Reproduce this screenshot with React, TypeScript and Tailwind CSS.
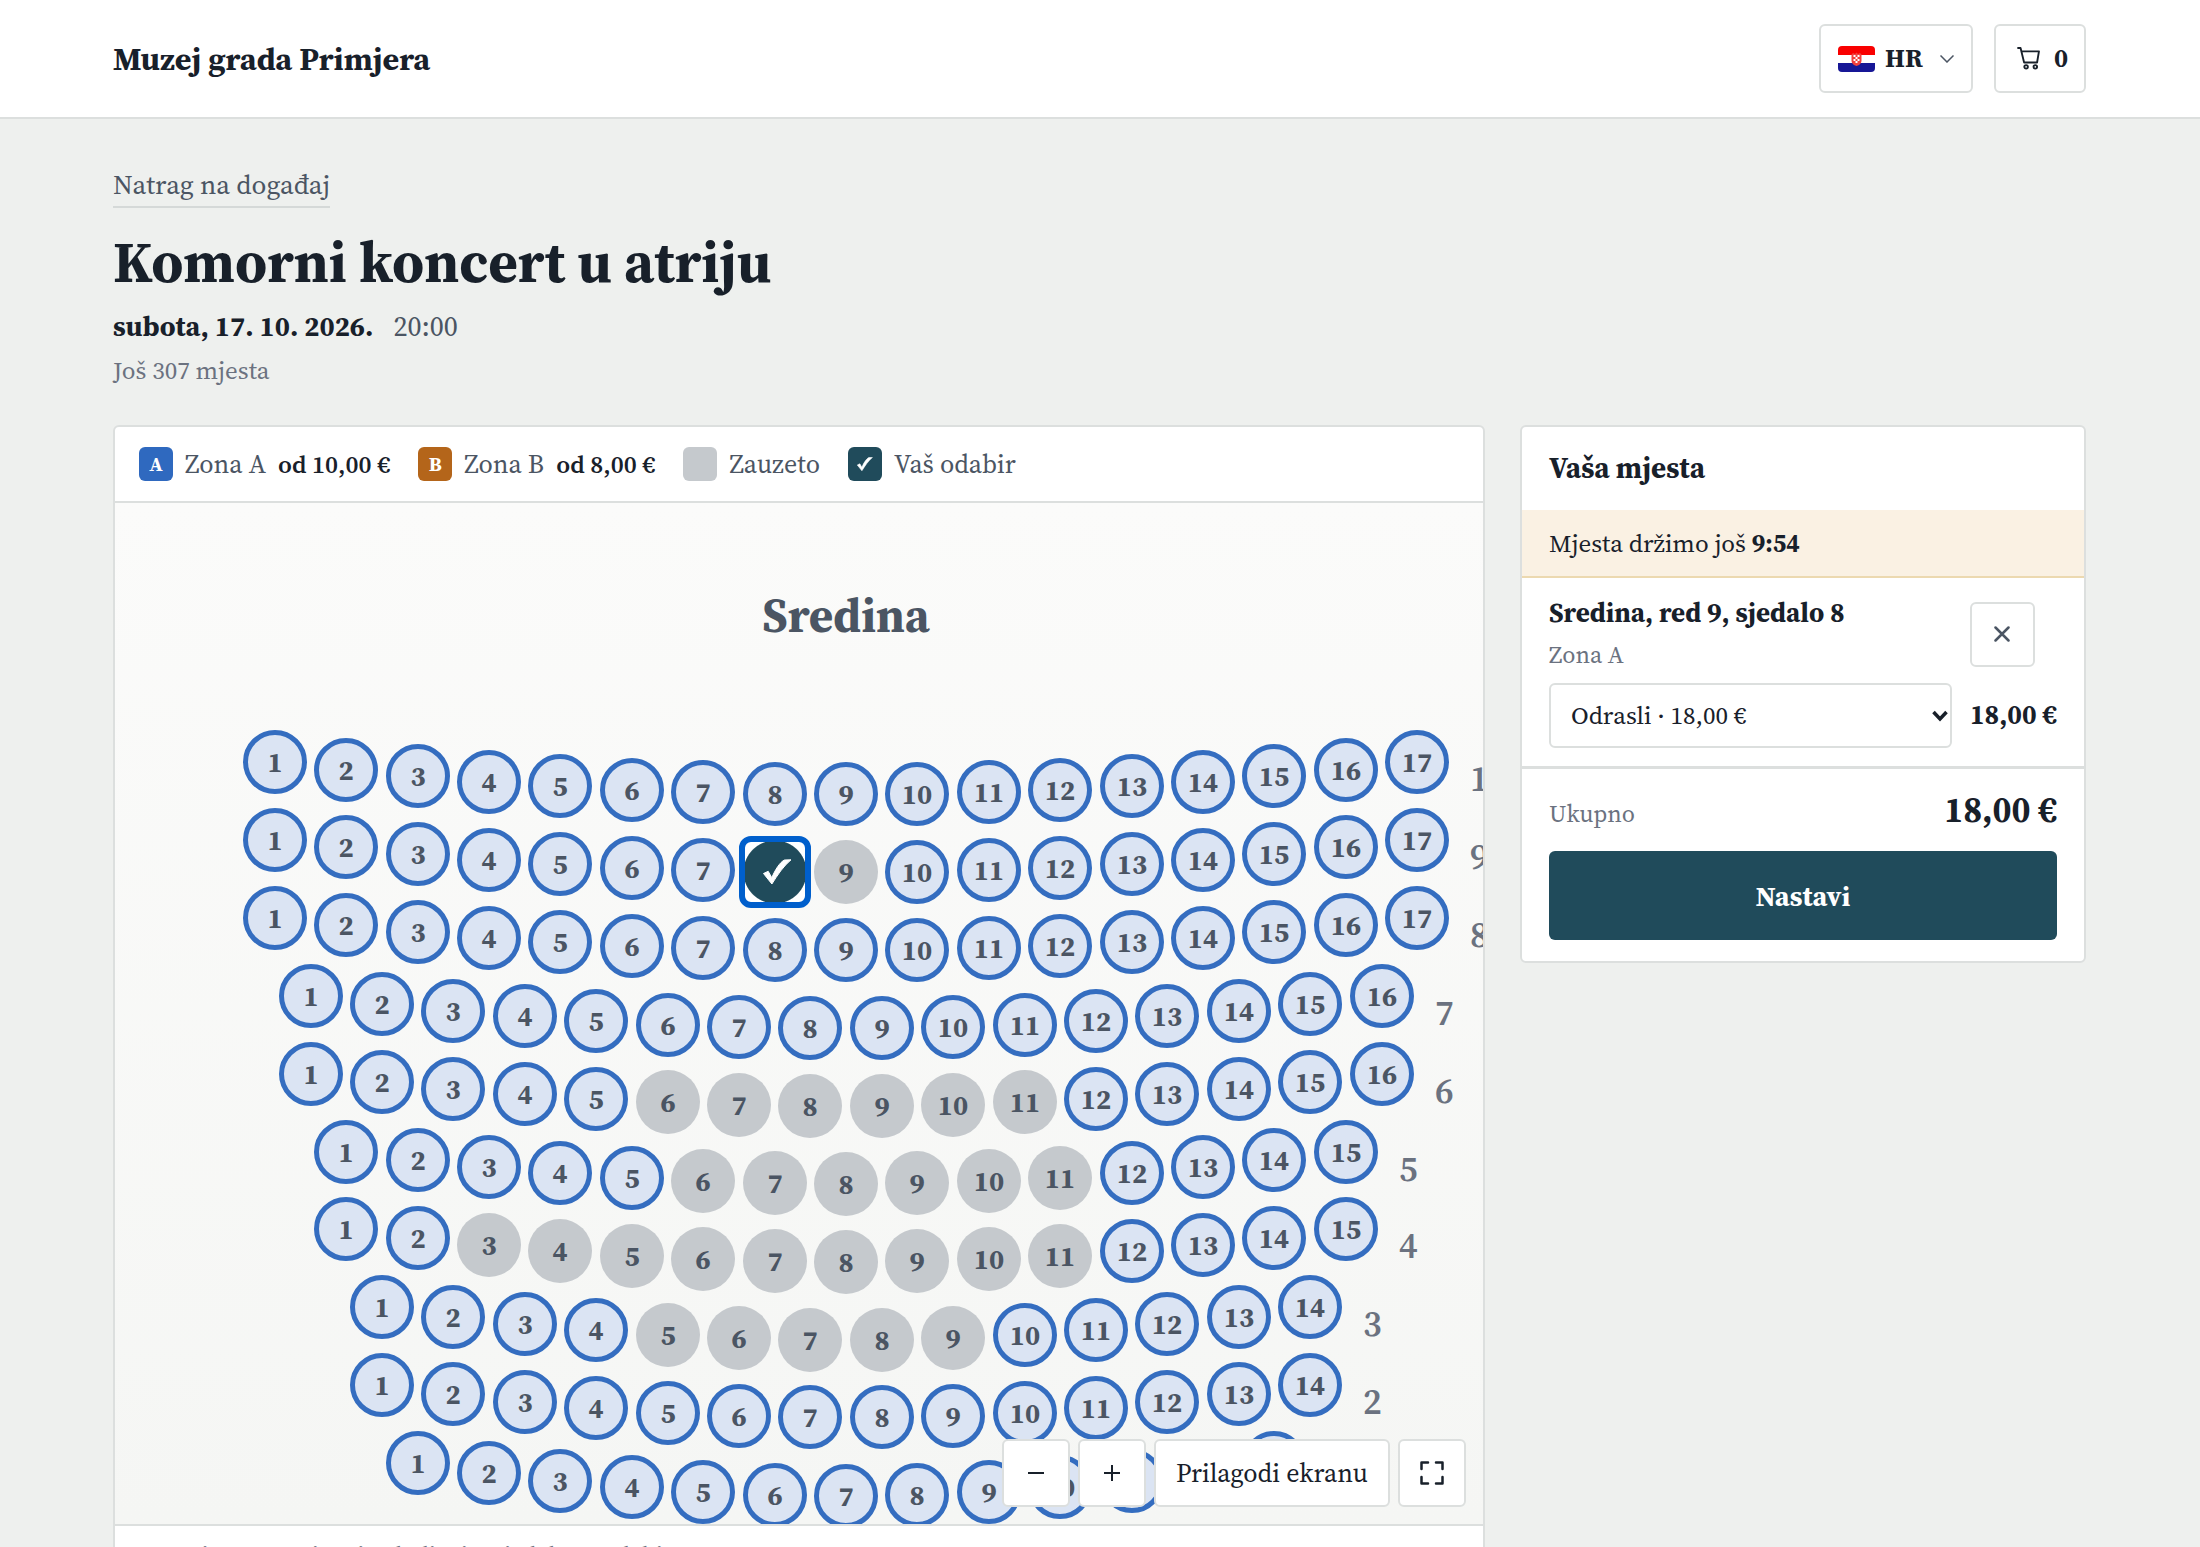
import React, { useState } from "react";
import { clsx } from "clsx";

type SeatState = "free" | "taken" | "selected";

type Row = {
  label: string;
  seats: number;
  taken?: number[];
};

const rows: Row[] = [
  { label: "10", seats: 17 },
  { label: "9", seats: 17, taken: [9] },
  { label: "8", seats: 17 },
  { label: "7", seats: 16 },
  { label: "6", seats: 16, taken: [6, 7, 8, 9, 10, 11] },
  { label: "5", seats: 15, taken: [6, 7, 8, 9, 10, 11] },
  { label: "4", seats: 15, taken: [3, 4, 5, 6, 7, 8, 9, 10, 11] },
  { label: "3", seats: 14, taken: [5, 6, 7, 8, 9] },
  { label: "2", seats: 14 },
  { label: "1", seats: 13 },
];

// seat map geometry
const CENTER_X = 731;
const TOP_Y = 259;
const SEAT_GAP = 71.4;
const ROW_GAP = 77.9;
const SAG = 32.4;

const seatPosition = (rowIndex: number, seatIndex: number, count: number) => {
  const half = (count - 1) / 2;
  const d = seatIndex - half;
  return {
    left: Math.round(CENTER_X + d * SEAT_GAP),
    top: Math.round(TOP_Y + rowIndex * ROW_GAP + SAG * (1 - (d / half) ** 2)),
  };
};

const Flag = () => (
  <svg viewBox="0 0 37 26" className="h-[26px] w-[37px] rounded" aria-hidden="true">
    <rect width="37" height="26" fill="#fff" />
    <rect width="37" height="9" fill="#f90000" />
    <rect y="17" width="37" height="9" fill="#171796" />
    <path d="M13.5 8.5 15 7l2 1 1.5-1.5L20 8l2-1 1.5 1.500V15q-.5 4-5 5-4.500-1-5-5z" fill="#f3403c" />
    <path
      d="M15.500 9h2v2h-2zM19.500 9h2v2h-2zM17.500 11h2v2h-2zM15.500 13h2v2h-2zM19.500 13h2v2h-2zM17.500 15h2v2h-2z"
      fill="#fff"
    />
  </svg>
);

const CartIcon = () => (
  <svg viewBox="0 0 22 22" className="h-[23px] w-[23px] shrink-0" fill="none" stroke="currentColor" strokeWidth="1.800" strokeLinejoin="round" strokeLinecap="round" aria-hidden="true">
    <path d="M1 1h2.400l3.400 13.800h12.400L21 4.200H4.400" />
    <circle cx="8.700" cy="19" r="1.700" />
    <circle cx="17.500" cy="19" r="1.700" />
  </svg>
);

const CheckIcon = ({ className }: { className: string }) => (
  <svg viewBox="0 0 29 26" className={className} fill="currentColor" stroke="currentColor" strokeWidth="1" strokeLinejoin="round" aria-hidden="true">
    <path d="M.5 14.500 5.200 12.300l3.600 6.400C12 11 17 3 21.500 1L28 .8C20.500 7 14.500 16 8.900 25z" />
  </svg>
);

const Seat = ({ rowIndex, number, row, state, onToggle }: { rowIndex: number; number: number; row: Row; state: SeatState; onToggle: () => void }) => (
  <button
    type="button"
    aria-label={`Red ${row.label}, sjedalo ${number}`}
    aria-pressed={state === "selected"}
    disabled={state === "taken"}
    onClick={onToggle}
    style={seatPosition(rowIndex, number - 1, row.seats)}
    className={clsx(
      "absolute flex h-16 w-16 -translate-x-1/2 -translate-y-1/2 items-center justify-center text-[28px] font-bold text-[#4b5563]",
      state === "free" && "rounded-full border-5 border-[#346dc0] bg-[#dbe4f3]",
      state === "taken" && "rounded-full bg-[#c5c9cd]",
      state === "selected" && "z-10 rounded-lg bg-[radial-gradient(circle,#204b5b_31px,#ffffff_32px)] text-white outline-6 -outline-offset-2 outline-[#005fcc]"
    )}
  >
    {state === "selected" ? <CheckIcon className="ml-1 w-[29px]" /> : number}
  </button>
);

const LegendItem = ({ swatch, mark, label, price }: { swatch: string; mark?: React.ReactNode; label: string; price?: string }) => (
  <li className="flex items-center gap-3 leading-[34px]">
    <span className={clsx("flex h-[34px] w-[34px] items-center justify-center rounded-md text-xl leading-[34px] font-bold text-white", swatch)}>{mark}</span>
    <span className="text-[26px] text-[#4b5563]">{label}</span>
    {price && <strong className="text-[25px] font-semibold">{price}</strong>}
  </li>
);

const Header = () => (
  <header className="border-b-2 border-[#dcdfde] bg-white">
    <div className="flex items-center justify-between py-6 pr-[114px] pl-[113px]">
      <a href="#" className="text-[32px] font-bold">
        Muzej grada Primjera
      </a>
      <div className="flex items-center gap-[21px] text-[26px] font-bold">
        <button type="button" aria-haspopup="listbox" className="flex h-[69px] w-[154px] items-center rounded-md border-2 border-[#dcdfde] px-[17px]">
          <Flag />
          <span className="ml-2.5">HR</span>
          <svg viewBox="0 0 14 8" className="ml-auto h-2 w-[14px]" fill="none" stroke="#4b5563" strokeWidth="1.500" aria-hidden="true">
            <path d="m.5.5 6.500 6.500L13.500.5" />
          </svg>
        </button>
        <a href="#" aria-label="Košarica, 0" className="flex h-[69px] w-[92px] items-center gap-3.5 rounded-md border-2 border-[#dcdfde] pl-[21px]">
          <CartIcon />
          <span>0</span>
        </a>
      </div>
    </div>
  </header>
);

const SeatMap = () => {
  const [selected, setSelected] = useState<string[]>(["9-8"]);

  const toggle = (id: string) =>
    setSelected((prev) => (prev.includes(id) ? prev.filter((s) => s !== id) : [...prev, id]));

  const stateOf = (row: Row, number: number): SeatState => {
    if (row.taken?.includes(number)) return "taken";
    return selected.includes(`${row.label}-${number}`) ? "selected" : "free";
  };

  const control = "flex h-[68px] items-center justify-center rounded-md border-2 border-[#dcdfde] bg-white";

  return (
    <section className="min-w-0 overflow-hidden rounded-md border-2 border-[#dcdfde] bg-white">
      <ul className="flex flex-wrap items-center gap-7 border-b-2 border-[#dcdfde] px-6 py-5">
        <LegendItem swatch="bg-[#2f69bf]" mark="A" label="Zona A" price="od 10,00 €" />
        <LegendItem swatch="bg-[#b4651a]" mark="B" label="Zona B" price="od 8,00 €" />
        <LegendItem swatch="bg-[#c5c9cd]" label="Zauzeto" />
        <LegendItem swatch="bg-[#204b5b]" mark={<CheckIcon className="w-4" />} label="Vaš odabir" />
      </ul>

      <div className="relative h-[66vh] overflow-hidden bg-linear-to-b from-[#fbfbfa] to-[#f5f6f4]">
        <h2 className="absolute top-[83px] left-[731px] -translate-x-1/2 text-[47px] leading-[60px] font-bold text-[#4b5563]">Sredina</h2>
        {rows.map((row, rowIndex) => {
          const last = seatPosition(rowIndex, row.seats - 1, row.seats);
          return (
            <React.Fragment key={row.label}>
              {Array.from({ length: row.seats }, (_, i) => (
                <Seat
                  key={i}
                  rowIndex={rowIndex}
                  number={i + 1}
                  row={row}
                  state={stateOf(row, i + 1)}
                  onToggle={() => toggle(`${row.label}-${i + 1}`)}
                />
              ))}
              <span className="absolute text-4xl leading-[34px] font-semibold text-[#6b7280]" style={{ left: last.left + 53, top: last.top }}>
                {row.label}
              </span>
            </React.Fragment>
          );
        })}

        <div className="absolute right-[17px] bottom-[17px] z-20 flex gap-2 text-[26px]">
          <button type="button" aria-label="Umanji" className={clsx(control, "w-[68px]")}>
            <svg viewBox="0 0 16 16" className="h-4 w-4" stroke="currentColor" strokeWidth="2" aria-hidden="true">
              <path d="M0 8h16" />
            </svg>
          </button>
          <button type="button" aria-label="Uvećaj" className={clsx(control, "w-[68px]")}>
            <svg viewBox="0 0 16 16" className="h-4 w-4" stroke="currentColor" strokeWidth="2" aria-hidden="true">
              <path d="M0 8h16M8 0v16" />
            </svg>
          </button>
          <button type="button" className={clsx(control, "px-5")}>
            Prilagodi ekranu
          </button>
          <button type="button" aria-label="Cijeli zaslon" className={clsx(control, "w-[68px]")}>
            <svg viewBox="0 0 24 24" className="h-6 w-6" fill="none" stroke="currentColor" strokeWidth="2.500" strokeLinecap="round" strokeLinejoin="round" aria-hidden="true">
              <path d="M1.500 8V1.500H8M16 1.500h6.500V8M22.500 16v6.500H16M8 22.500H1.500V16" />
            </svg>
          </button>
        </div>
      </div>

      <p className="border-t-2 border-[#dcdfde] px-[22px] pt-3.5 pb-4 text-2xl text-[#6b7280]">
        Povucite za pomicanje, dodirnite sjedalo za odabir.
      </p>
    </section>
  );
};

const Summary = () => (
  <aside className="rounded-md border-2 border-[#dcdfde] bg-white">
    <h2 className="px-[27px] pt-[21px] pb-[22px] text-[29px] leading-10 font-bold">Vaša mjesta</h2>
    <p className="border-b-2 border-[#ecd9b0] bg-[#faf1e3] px-[27px] py-4 text-[25px] leading-[34px]">
      Mjesta držimo još <strong>9:54</strong>
    </p>
    <div className="grid grid-cols-[1fr_auto] items-center gap-x-[18px] gap-y-2.5 px-[27px] pt-[17px] pb-[18px]">
      <div>
        <h3 className="text-[27px] leading-9 font-bold">Sredina, red 9, sjedalo 8</h3>
        <p className="mt-1.5 text-2xl leading-9 text-[#6b7280]">Zona A</p>
      </div>
      <button type="button" aria-label="Ukloni sjedalo" className="flex h-[65px] w-[65px] items-center justify-center rounded-md border-2 border-[#dcdfde] text-[#4b5563]">
        <svg viewBox="0 0 16 16" className="h-4 w-4" stroke="currentColor" strokeWidth="2.500" strokeLinecap="round" aria-hidden="true">
          <path d="m1.500 1.500 13 13M14.500 1.500l-13 13" />
        </svg>
      </button>
      <div className="relative">
        <select aria-label="Vrsta ulaznice" className="h-[65px] w-full appearance-none rounded-md border-2 border-[#dcdfde] bg-white px-5 text-[25px]">
          <option>Odrasli · 18,00 €</option>
        </select>
        <svg viewBox="0 0 16 12" className="pointer-events-none absolute top-[27px] right-1 h-3 w-4" fill="none" stroke="currentColor" strokeWidth="3.500" aria-hidden="true">
          <path d="m1.500 2 6.500 7 6.500-7" />
        </svg>
      </div>
      <strong className="text-[27px]">18,00 €</strong>
    </div>
    <div className="border-t-3 border-[#dcdfde] px-[27px] pt-[17px] pb-[21px]">
      <div className="flex items-baseline justify-between">
        <span className="text-2xl text-[#6b7280]">Ukupno</span>
        <strong className="text-[35px] leading-[48px]">18,00 €</strong>
      </div>
      <button type="button" className="mt-[17px] h-[89px] w-full rounded-md bg-[#204b5b] text-[28px] font-bold text-white">
        Nastavi
      </button>
    </div>
  </aside>
);

const App = () => {
  return (
    <div className="h-screen overflow-hidden bg-[#eef0ee] font-['Source_Serif_4','Liberation_Serif',serif] text-[#18202a]">
      <Header />
      <main className="pt-12 pr-[114px] pl-[113px]">
        <a href="#" className="block w-fit border-b-2 border-[#d5d9d8] pb-[3px] text-[27px] leading-9 text-[#4b5563]">
          Natrag na događaj
        </a>
        <h1 className="mt-[18px] text-[57px] leading-[72px] font-bold">Komorni koncert u atriju</h1>
        <p className="mt-2 flex gap-5 text-[28px] leading-10">
          <strong>subota, 17. 10. 2026.</strong>
          <span className="text-[#4b5563]">20:00</span>
        </p>
        <p className="mt-1.5 text-[25px] leading-9 text-[#6b7280]">Još 307 mjesta</p>
        <div className="mt-[37px] grid grid-cols-[minmax(0,1fr)_566px] items-start gap-[35px]">
          <SeatMap />
          <Summary />
        </div>
      </main>
    </div>
  );
};

export default App;
